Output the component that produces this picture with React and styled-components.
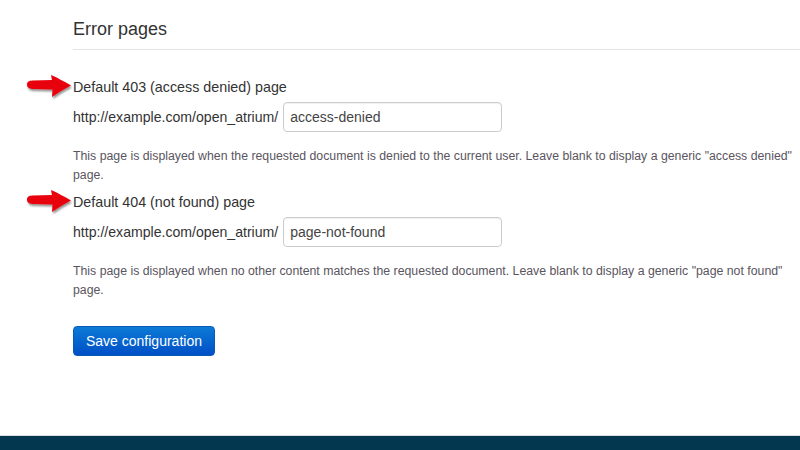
import React from 'react';
import styled, { createGlobalStyle } from 'styled-components';

const GlobalStyle = createGlobalStyle`
  html, body {
    margin: 0;
    padding: 0;
    background: #fff;
    overflow: hidden;
  }
  body {
    font-family: "Liberation Sans", Arial, sans-serif;
    color: #333;
  }
`;

const Page = styled.div`
  display: flex;
  flex-direction: column;
  height: 100vh;
`;

const Main = styled.main`
  flex: 1;
  padding: 18px 0 0 73px;
`;

const SectionTitle = styled.h2`
  margin: 0;
  padding-bottom: 9px;
  border-bottom: 1px solid #e5e5e5;
  font-size: 18px;
  line-height: 22px;
  font-weight: normal;
  color: #333;
`;

const FormItem = styled.div`
  margin-top: ${(p) => (p.$first ? '27px' : '7px')};
`;

const Label = styled.label`
  position: relative;
  display: block;
  font-size: 14.3px;
  line-height: 20px;
  color: #333;
`;

// red annotation arrow pointing at the label
const Arrow = styled.svg`
  position: absolute;
  left: -49px;
  top: -6px;
  width: 50px;
  height: 30px;
  overflow: visible;
`;

const Row = styled.div`
  display: flex;
  align-items: center;
  gap: 5px;
  margin-top: 5px;
  font-size: 14.1px;
  color: #333;
`;

const TextInput = styled.input`
  box-sizing: border-box;
  width: 219px;
  height: 30px;
  padding: 0 6px;
  border: 1px solid #ccc;
  border-radius: 4px;
  box-shadow: inset 0 1px 1px rgba(0, 0, 0, 0.06);
  font-family: "Liberation Sans", Arial, sans-serif;
  font-size: 14px;
  color: #444;
  outline: none;
`;

const Description = styled.div`
  margin-top: 15px;
  max-width: 729px;
  font-size: 12.3px;
  line-height: 19px;
  color: #5a5560;
`;

const SaveButton = styled.button`
  margin-top: 26px;
  height: 30px;
  padding: 0 12px;
  border: 1px solid #0a58b8;
  border-radius: 4px;
  background: linear-gradient(to bottom, #0c7ad6, #0050c6);
  color: #fff;
  font-family: "Liberation Sans", Arial, sans-serif;
  font-size: 14px;
  cursor: pointer;
`;

const Footer = styled.footer`
  height: 14px;
  border-top: 1px solid #d8dde0;
  background: #02374f;
`;

const RedArrow = () => (
  <Arrow viewBox="0 0 50 30">
    <defs>
      <filter id="arrowShadow" x="-20%" y="-20%" width="140%" height="160%">
        <feDropShadow dx="1" dy="2" stdDeviation="1.2" floodColor="#000" floodOpacity="0.45" />
      </filter>
    </defs>
    <path
      d="M3 13.5 C3 10 6 9.5 10 9.5 L28 9 L27 4 C34 7 40 10.5 47 14.5 C40 18 34 22 28 26 L28.5 18.5 L10 18 C6 18 3 17 3 13.5 Z"
      fill="#e8000a"
      filter="url(#arrowShadow)"
    />
  </Arrow>
);

const pages = [
  {
    label: 'Default 403 (access denied) page',
    value: 'access-denied',
    help: 'This page is displayed when the requested document is denied to the current user. Leave blank to display a generic "access denied" page.',
  },
  {
    label: 'Default 404 (not found) page',
    value: 'page-not-found',
    help: 'This page is displayed when no other content matches the requested document. Leave blank to display a generic "page not found" page.',
  },
];

export default function App() {
  return (
    <Page>
      <GlobalStyle />
      <Main>
        <SectionTitle>Error pages</SectionTitle>
        {pages.map((item, i) => (
          <FormItem key={item.value} $first={i === 0}>
            <Label>
              <RedArrow />
              {item.label}
            </Label>
            <Row>
              <span>http://example.com/open_atrium/</span>
              <TextInput defaultValue={item.value} />
            </Row>
            <Description>{item.help}</Description>
          </FormItem>
        ))}
        <SaveButton>Save configuration</SaveButton>
      </Main>
      <Footer />
    </Page>
  );
}
